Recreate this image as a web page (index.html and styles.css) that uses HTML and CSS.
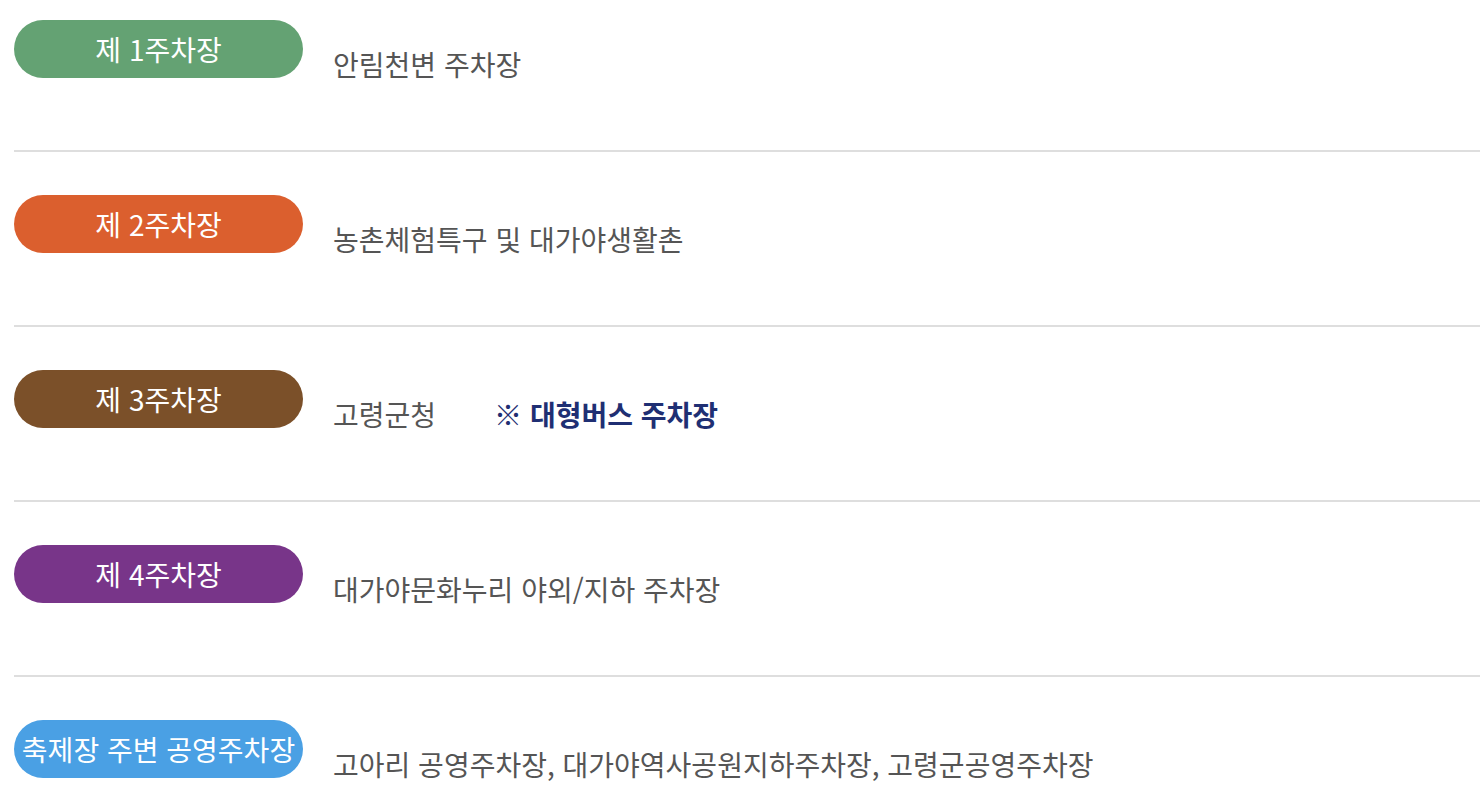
FILE: index.html
```html
<!DOCTYPE html>
<html lang="ko">
<head>
<meta charset="utf-8">
<title>주차장 안내</title>
<link rel="stylesheet" href="styles.css">
</head>
<body>
<ul class="parking-list">
  <li class="parking-item">
    <span class="badge badge-green">제 1주차장</span>
    <p class="desc">안림천변 주차장</p>
  </li>
  <li class="parking-item">
    <span class="badge badge-orange">제 2주차장</span>
    <p class="desc">농촌체험특구 및 대가야생활촌</p>
  </li>
  <li class="parking-item">
    <span class="badge badge-brown">제 3주차장</span>
    <p class="desc">고령군청<strong class="note">※ 대형버스 주차장</strong></p>
  </li>
  <li class="parking-item">
    <span class="badge badge-purple">제 4주차장</span>
    <p class="desc">대가야문화누리 야외/지하 주차장</p>
  </li>
  <li class="parking-item">
    <span class="badge badge-blue">축제장 주변 공영주차장</span>
    <p class="desc">고아리 공영주차장, 대가야역사공원지하주차장, 고령군공영주차장</p>
  </li>
</ul>
</body>
</html>
```

FILE: styles.css
```css
html, body {
  margin: 0;
  padding: 0;
  background: #ffffff;
}

body {
  font-family: "Noto Sans CJK KR", "Noto Sans", sans-serif;
  color: #555555;
}

.parking-list {
  list-style: none;
  margin: 0;
  padding: 20px 4px 0 14px;
}

.parking-item {
  display: flex;
  align-items: flex-start;
  gap: 30px;
  padding-bottom: 66px;
  margin-bottom: 43px;
  border-bottom: 2px solid #dedede;
}

.parking-item:last-child {
  border-bottom: none;
  margin-bottom: 0;
}

.badge {
  flex: 0 0 289px;
  height: 58px;
  line-height: 58px;
  border-radius: 29px;
  text-align: center;
  color: #ffffff;
  font-size: 28px;
  white-space: nowrap;
}

.badge-green { background: #64a273; }
.badge-orange { background: #db5f2e; }
.badge-brown { background: #7b5029; }
.badge-purple { background: #783589; }
.badge-blue { background: #4aa0e4; }

.desc {
  margin: 24px 0 0;
  font-size: 28px;
  line-height: 40px;
  color: #555555;
}

.note {
  margin-left: 58px;
  color: #1f2f73;
  font-weight: 700;
}
```
